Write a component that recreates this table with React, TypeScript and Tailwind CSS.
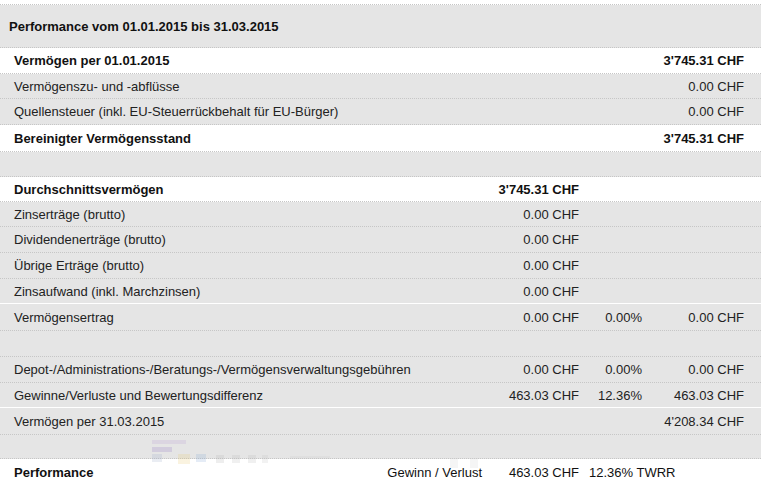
type Row = {
  label: string;
  h: number;
  bold?: boolean;
  white?: boolean;
  a?: string;
  p?: string;
  b?: string;
  whiteLine?: boolean;
};

const ROWS: Row[] = [
  { label: 'Vermögen per 01.01.2015', h: 26, bold: true, white: true, b: "3'745.31 CHF" },
  { label: 'Vermögenszu- und -abflüsse', h: 25, b: '0.00 CHF' },
  { label: 'Quellensteuer (inkl. EU-Steuerrückbehalt für EU-Bürger)', h: 26, b: '0.00 CHF' },
  { label: 'Bereinigter Vermögensstand', h: 27, bold: true, white: true, b: "3'745.31 CHF" },
  { label: '', h: 25 },
  { label: 'Durchschnittsvermögen', h: 25, bold: true, white: true, a: "3'745.31 CHF" },
  { label: 'Zinserträge (brutto)', h: 25, a: '0.00 CHF' },
  { label: 'Dividendenerträge (brutto)', h: 26, a: '0.00 CHF' },
  { label: 'Übrige Erträge (brutto)', h: 26, a: '0.00 CHF' },
  { label: 'Zinsaufwand (inkl. Marchzinsen)', h: 25, a: '0.00 CHF', whiteLine: true },
  { label: 'Vermögensertrag', h: 27, a: '0.00 CHF', p: '0.00%', b: '0.00 CHF' },
  { label: '', h: 26 },
  { label: 'Depot-/Administrations-/Beratungs-/Vermögensverwaltungsgebühren', h: 26, a: '0.00 CHF', p: '0.00%', b: '0.00 CHF' },
  { label: 'Gewinne/Verluste und Bewertungsdifferenz', h: 25, a: '463.03 CHF', p: '12.36%', b: '463.03 CHF', whiteLine: true },
  { label: 'Vermögen per 31.03.2015', h: 27, b: "4'208.34 CHF" },
  { label: '', h: 24 },
];

function TableRow({ row }: { row: Row }) {
  const bg = row.white ? 'bg-white' : 'bg-[#e5e5e5]';
  const weight = row.bold ? 'font-bold text-[#111]' : 'text-[#222]';
  const border = row.whiteLine ? 'border-b border-solid border-white' : 'border-b border-dotted border-[#c6c6c6]';
  return (
    <div
      className={`grid grid-cols-[490px_89px_63px_102px_17px] items-center ${bg} ${border} ${weight}`}
      style={{ height: row.h }}
    >
      <div className="pl-[14px] whitespace-nowrap">{row.label}</div>
      <div className="text-right whitespace-nowrap">{row.a}</div>
      <div className="text-right whitespace-nowrap">{row.p}</div>
      <div className="text-right whitespace-nowrap">{row.b}</div>
      <div />
    </div>
  );
}

function Watermark() {
  return (
    <svg className="absolute left-[150px] top-[440px] opacity-20 pointer-events-none" width="420" height="38" viewBox="0 0 420 38">
      <rect x="2" y="0" width="34" height="4" fill="#b59ad6" />
      <rect x="2" y="7" width="20" height="5" fill="#8a6cc0" />
      <rect x="2" y="14" width="10" height="8" fill="#9aa8c8" />
      <rect x="28" y="14" width="12" height="10" fill="#e8c86a" />
      <rect x="46" y="14" width="10" height="8" fill="#7fa6d6" />
      <rect x="66" y="15" width="8" height="8" fill="#b0b0b0" />
      <rect x="82" y="15" width="8" height="8" fill="#b8b8b8" />
      <rect x="98" y="15" width="8" height="8" fill="#b8b8b8" />
      <rect x="112" y="15" width="6" height="8" fill="#c0c0c0" />
      <rect x="140" y="16" width="40" height="3" fill="#c8c8c8" />
      <rect x="300" y="18" width="8" height="10" fill="#d0d0d0" />
      <rect x="320" y="18" width="8" height="10" fill="#d0d0d0" />
    </svg>
  );
}

export default function App() {
  return (
    <div className="relative w-[770px] h-[478px] bg-white overflow-hidden text-[13px] leading-none font-['Liberation_Sans',Arial,sans-serif]">
      <div className="w-[761px] mt-[4px] border-t border-dotted border-[#c6c6c6]">
        <div className="h-[43px] flex items-center bg-[#e5e5e5] border-b border-dotted border-[#c6c6c6] pl-[9px] font-bold text-[#111]">
          Performance vom 01.01.2015 bis 31.03.2015
        </div>
        {ROWS.map((r, i) => (
          <TableRow key={i} row={r} />
        ))}
        <div className="grid grid-cols-[490px_89px_63px_102px_17px] items-center h-[26px] bg-white text-[#111]">
          <div className="pl-[14px] pr-[8px] flex justify-between whitespace-nowrap">
            <span className="font-bold">Performance</span>
            <span>Gewinn / Verlust</span>
          </div>
          <div className="text-right whitespace-nowrap">463.03 CHF</div>
          <div className="pl-[10px] whitespace-nowrap col-span-2">12.36% TWRR</div>
        </div>
      </div>
      <Watermark />
    </div>
  );
}
